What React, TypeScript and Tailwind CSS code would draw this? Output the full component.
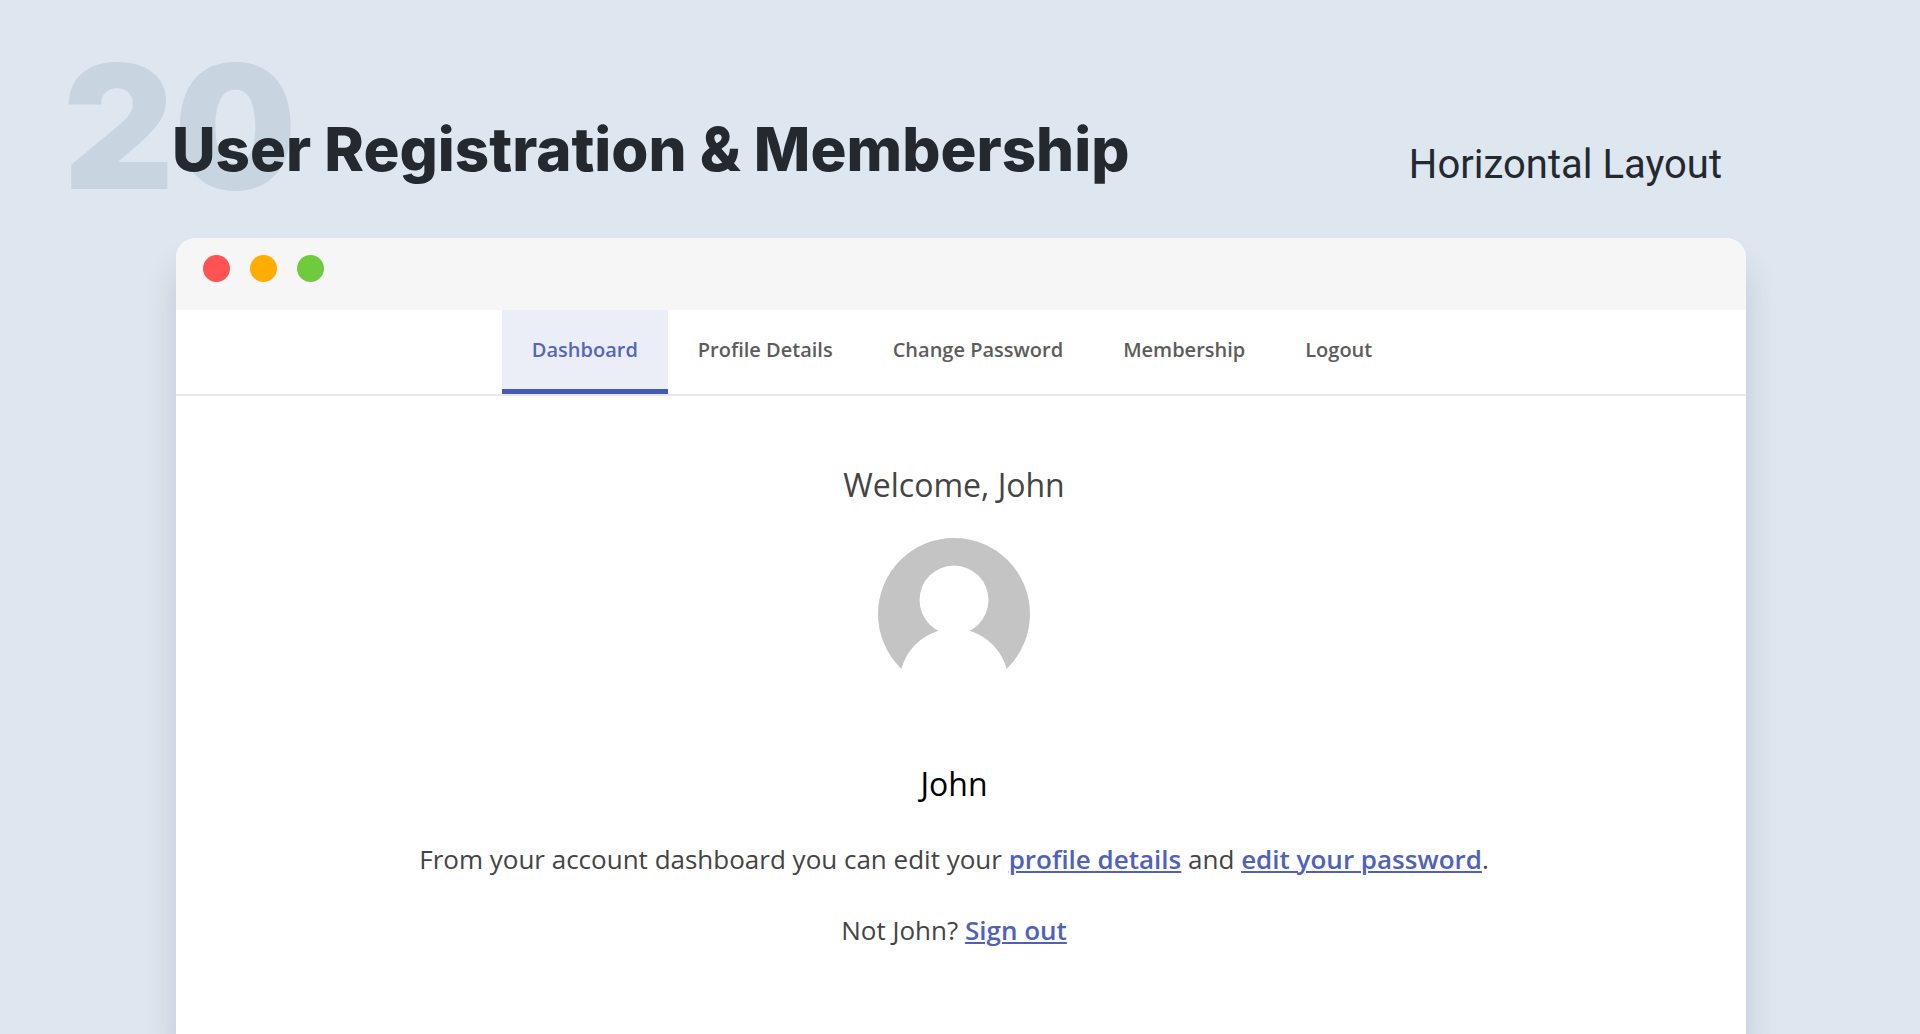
const tabs = ['Dashboard', 'Profile Details', 'Change Password', 'Membership', 'Logout'];

const linkClass = 'font-semibold text-[#4f62ba] underline decoration-2 underline-offset-2';

function Header() {
  return (
    <header className="relative mb-[53px] flex items-end justify-between pt-[119px] pr-6">
      <span className="absolute top-10 -left-[113px] font-['Inter',sans-serif] text-[172px] leading-none font-black text-[#c8d4e0]">
        20
      </span>
      <h1 className="relative -ml-1 pb-1.5 font-['Inter',sans-serif] text-[60px] leading-none font-extrabold text-[#24292f]">
        User Registration &amp; Membership
      </h1>
      <p className="font-['Roboto',sans-serif] text-[40px] leading-none text-[#24292f]">Horizontal Layout</p>
    </header>
  );
}

function Avatar() {
  return (
    <svg viewBox="0 0 152 152" className="size-[152px]" role="img" aria-label="John's avatar">
      <circle cx="76" cy="76" r="76" fill="#c4c4c4" />
      <circle cx="76" cy="62" r="34.5" fill="#fff" />
      <circle cx="76" cy="145" r="54.5" fill="#fff" />
      <path d="M24 131 L128 131 L128 152 L24 152 Z" fill="#fff" />
    </svg>
  );
}

export default function App() {
  return (
    <div className="flex min-h-screen flex-col bg-[#dee6ef] pr-[174px] pl-44">
      <Header />
      <main className="flex-1 rounded-t-[20px] bg-white font-['Open_Sans',sans-serif] shadow-[0_28px_32px_rgba(50,70,95,0.18)]">
        <div className="flex h-[72px] gap-5 rounded-t-[20px] bg-[#f6f6f6] px-[27px] pt-[17px]">
          <span className="size-[27px] rounded-full bg-[#ff5353]" />
          <span className="size-[27px] rounded-full bg-[#ffad00]" />
          <span className="size-[27px] rounded-full bg-[#6fca3d]" />
        </div>
        <nav className="flex justify-center border-b-2 border-[#e9e9e9] pr-[18px]">
          {tabs.map((tab, i) => (
            <a
              key={tab}
              href="#"
              aria-current={i === 0 ? 'page' : undefined}
              className={
                i === 0
                  ? 'h-[84px] border-b-[5px] border-[#465ab5] bg-[#ebeef7] px-[30px] text-xl leading-[80px] font-semibold text-[#5566bc]'
                  : 'h-[84px] px-[30px] text-xl leading-[80px] font-semibold text-[#5c5c5c]'
              }
            >
              {tab}
            </a>
          ))}
        </nav>
        <section className="flex flex-col items-center pt-[69px] pr-[14px] text-[26px] leading-10 text-[#444]">
          <h2 className="mb-[33px] text-[32px]">Welcome, John</h2>
          <Avatar />
          <h3 className="mt-[74px] text-[32px] text-black">John</h3>
          <p className="mt-[35px]">
            From your account dashboard you can edit your{' '}
            <a href="#" className={linkClass}>
              profile details
            </a>{' '}
            and{' '}
            <a href="#" className={linkClass}>
              edit your password
            </a>
            .
          </p>
          <p className="mt-[31px]">
            Not John?{' '}
            <a href="#" className={linkClass}>
              Sign out
            </a>
          </p>
        </section>
      </main>
    </div>
  );
}
